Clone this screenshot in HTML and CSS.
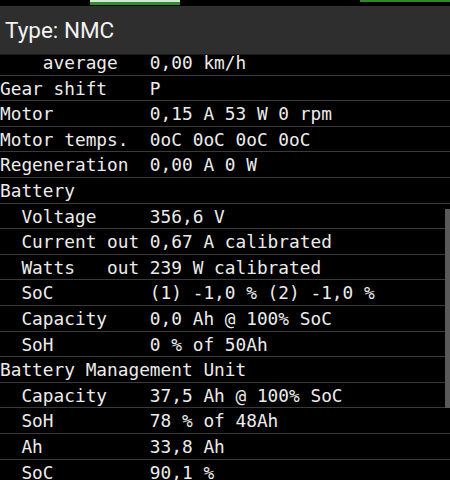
FILE: index.html
```html
<!DOCTYPE html>
<html lang="en">
<head>
  <meta charset="UTF-8" />
  <meta name="viewport" content="width=device-width, initial-scale=1.0"/>
  <title>Battery</title>
  <link rel="stylesheet" href="styles.css">
</head>
<body>
  <div class="tabs">
    <div class="tab active"></div>
    <div class="tab next"></div>
  </div>

  <div class="header">Type: NMC</div>

  <div class="list-wrap">
    <div class="list">
      <div class="row"><span class="label sub2">average</span><span class="value">0,00 km/h</span></div>
      <div class="row"><span class="label">Gear shift</span><span class="value">P</span></div>
      <div class="row"><span class="label">Motor</span><span class="value">0,15 A 53 W 0 rpm</span></div>
      <div class="row"><span class="label">Motor temps.</span><span class="value">0oC 0oC 0oC 0oC</span></div>
      <div class="row"><span class="label">Regeneration</span><span class="value">0,00 A 0 W</span></div>
      <div class="row"><span class="label">Battery</span></div>
      <div class="row"><span class="label sub">Voltage</span><span class="value">356,6 V</span></div>
      <div class="row"><span class="label sub">Current out</span><span class="value">0,67 A calibrated</span></div>
      <div class="row"><span class="label sub">Watts   out</span><span class="value">239 W calibrated</span></div>
      <div class="row"><span class="label sub">SoC</span><span class="value">(1) -1,0 % (2) -1,0 %</span></div>
      <div class="row"><span class="label sub">Capacity</span><span class="value">0,0 Ah @ 100% SoC</span></div>
      <div class="row"><span class="label sub">SoH</span><span class="value">0 % of 50Ah</span></div>
      <div class="row"><span class="label">Battery Management Unit</span></div>
      <div class="row"><span class="label sub">Capacity</span><span class="value">37,5 Ah @ 100% SoC</span></div>
      <div class="row"><span class="label sub">SoH</span><span class="value">78 % of 48Ah</span></div>
      <div class="row"><span class="label sub">Ah</span><span class="value">33,8 Ah</span></div>
      <div class="row"><span class="label sub">SoC</span><span class="value">90,1 %</span></div>
    </div>
    <div class="scrollbar"></div>
  </div>
</body>
</html>
```

FILE: styles.css
```css
body {
  margin: 0;
  width: 450px;
  height: 480px;
  overflow: hidden;
  background-color: #000;
  color: #ececec;
}

.tabs {
  display: flex;
  height: 6px;
  background: #000;
}

.tab {
  width: 90px;
  flex-shrink: 0;
}

.tab.active {
  margin-left: 90px;
  border-top: 2px solid #d8e8d8;
  height: 3px;
  background: #2f8f2f;
}

.tab.next {
  margin-left: 180px;
  height: 2px;
  background: #2a8a2a;
}

.header {
  height: 48px;
  line-height: 48px;
  padding-left: 5px;
  background-color: #2e2e2e;
  border-bottom: 1px solid #1a1a1a;
  font-family: Roboto, sans-serif;
  font-size: 22.5px;
  color: #f2f2f2;
}

.list-wrap {
  position: relative;
  height: 425px;
  overflow: hidden;
}

.list {
  margin-top: -5px;
  font-family: "DejaVu Sans Mono", monospace;
  font-size: 17.8px;
}

.row {
  display: flex;
  height: 24.6px;
  line-height: 26px;
  border-bottom: 1px solid #3a3a3a;
  white-space: pre;
}

.label {
  width: 14ch;
  flex-shrink: 0;
}

.label.sub {
  padding-left: 2ch;
  width: 12ch;
}

.label.sub2 {
  padding-left: 4ch;
  width: 10ch;
}

.scrollbar {
  position: absolute;
  right: 0;
  top: 154px;
  width: 5px;
  height: 199px;
  background: #5a5a5a;
}
```
